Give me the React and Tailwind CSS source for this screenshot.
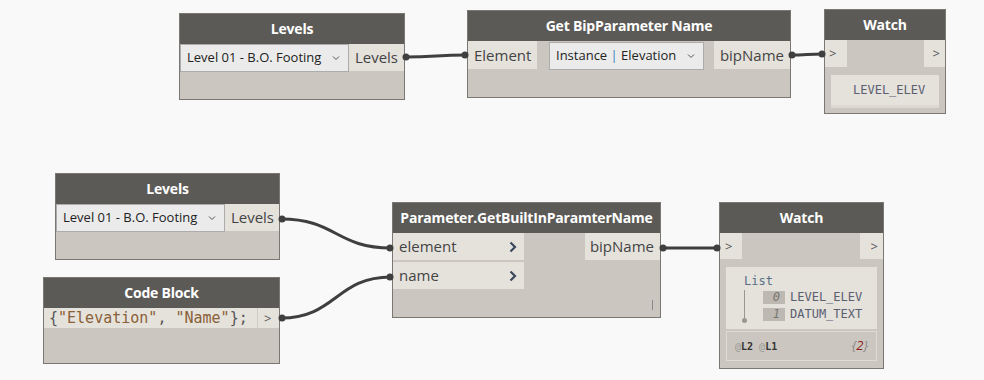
import React from "react";

const sans = { fontFamily: '"Open Sans", "Noto Sans", sans-serif' };
const mono = { fontFamily: '"DejaVu Sans Mono", "Liberation Mono", monospace' };

function Node({ left, top, width, height, title, children }) {
  return (
    <div
      className="absolute flex flex-col border border-[#7b7874] bg-[#cbc7c0]"
      style={{ left, top, width, height }}
    >
      <div className="h-[30px] shrink-0 bg-[#5c5a57] text-white font-bold text-[14px] tracking-[-0.2px] leading-[30px] text-center whitespace-nowrap overflow-hidden">
        {title}
      </div>
      {children}
    </div>
  );
}

function Dropdown({ width, text }) {
  return (
    <div
      className="h-[28px] flex items-center justify-between border border-[#acacac] bg-[#ebebeb] pl-[6px] pr-[8px] text-[13px] text-[#222]"
      style={{ width }}
    >
      <span className="whitespace-nowrap">{text}</span>
      <svg width="8" height="6" viewBox="0 0 8 6" className="ml-1">
        <path d="M1 1.5 L4 4.5 L7 1.5" stroke="#555" strokeWidth="1" fill="none" />
      </svg>
    </div>
  );
}

function Chevron() {
  return (
    <svg width="8" height="12" viewBox="0 0 8 12">
      <path d="M1.5 1.5 L6 6 L1.5 10.5" stroke="#3a4a5c" strokeWidth="2.2" fill="none" />
    </svg>
  );
}

export default function App() {
  return (
    <div className="relative w-[984px] h-[380px] overflow-hidden bg-[#f9f9f9]" style={sans}>
      {/* Levels top */}
      <Node left={179} top={13} width={226} height={87} title="Levels">
        <div className="flex">
          <Dropdown width={169} text="Level 01 - B.O. Footing" />
          <div className="flex-1 h-[27px] bg-[#e5e2dc] text-[15px] text-[#444] leading-[27px] text-right pr-[6px]">Levels</div>
        </div>
      </Node>

      {/* Get BipParameter Name */}
      <Node left={467} top={10} width={324} height={88} title="Get BipParameter Name">
        <div className="flex items-start">
          <div className="w-[69px] h-[28px] bg-[#e5e2dc] text-[15px] text-[#444] leading-[28px] pl-[6px]">Element</div>
          <div className="ml-[12px] mt-[1px]">
            <Dropdown width={155} text={<span>Instance <span className="text-[#3b7fc4]">|</span> Elevation</span>} />
          </div>
          <div className="ml-auto w-[76px] h-[28px] bg-[#e5e2dc] text-[15px] text-[#444] leading-[28px] text-right pr-[6px]">bipName</div>
        </div>
      </Node>

      {/* Watch top */}
      <Node left={824} top={9} width={122} height={105} title="Watch">
        <div className="flex justify-between">
          <div className="w-[22px] h-[27px] bg-[#e5e2dc] text-[13px] text-[#555] leading-[27px] pl-[4px]">&gt;</div>
          <div className="w-[21px] h-[27px] bg-[#e5e2dc] text-[13px] text-[#555] leading-[27px] text-right pr-[5px]">&gt;</div>
        </div>
        <div className="mx-[6px] mt-[8px] h-[30px] bg-[#e5e2dc] text-[12px] text-[#5a6070] leading-[30px] pl-[22px]" style={mono}>
          LEVEL_ELEV
        </div>
        <div className="mx-[6px] h-[3px] bg-[#dcd9d3]" />
      </Node>

      {/* Levels bottom */}
      <Node left={55} top={173} width={225} height={87} title="Levels">
        <div className="flex">
          <Dropdown width={169} text="Level 01 - B.O. Footing" />
          <div className="flex-1 h-[27px] bg-[#e5e2dc] text-[15px] text-[#444] leading-[27px] text-right pr-[5px]">Levels</div>
        </div>
      </Node>

      {/* Code Block */}
      <Node left={43} top={277} width={237} height={87} title="Code Block">
        <div className="flex h-[20px] bg-[#e5e2dc]">
          <div className="flex-1 text-[15px] leading-[20px] pl-[5px] whitespace-nowrap text-[#555]" style={mono}>
            {"{"}<span className="text-[#8a6036]">"Elevation"</span>, <span className="text-[#8a6036]">"Name"</span>{"};"}
          </div>
          <div className="w-[22px] border-l border-[#cfccc6] text-[13px] text-[#555] leading-[20px] pl-[6px]">&gt;</div>
        </div>
      </Node>

      {/* Parameter.GetBuiltInParamterName */}
      <Node left={392} top={202} width={269} height={116} title="Parameter.GetBuiltInParamterName">
        <div className="flex flex-1">
          <div className="flex flex-col gap-[2px]">
            <div className="w-[131px] h-[27px] bg-[#e5e2dc] flex items-center justify-between pl-[6px] pr-[7px] text-[15px] text-[#444]">
              <span>element</span>
              <Chevron />
            </div>
            <div className="w-[131px] h-[27px] bg-[#e5e2dc] flex items-center justify-between pl-[6px] pr-[7px] text-[15px] text-[#444]">
              <span>name</span>
              <Chevron />
            </div>
          </div>
          <div className="ml-auto flex flex-col items-end justify-between">
            <div className="w-[75px] h-[27px] bg-[#e5e2dc] text-[15px] text-[#444] leading-[27px] text-right pr-[6px]">bipName</div>
            <div className="w-[1px] h-[10px] bg-[#888] mr-[7px] mb-[7px]" />
          </div>
        </div>
      </Node>

      {/* Watch bottom */}
      <Node left={719} top={202} width={165} height={167} title="Watch">
        <div className="flex justify-between">
          <div className="w-[22px] h-[26px] bg-[#e5e2dc] text-[13px] text-[#555] leading-[26px] pl-[5px]">&gt;</div>
          <div className="w-[23px] h-[26px] bg-[#e5e2dc] text-[13px] text-[#555] leading-[26px] text-right pr-[5px]">&gt;</div>
        </div>
        <div className="mx-[6px] mt-[8px] h-[62px] bg-[#e5e2dc] relative text-[12px]" style={mono}>
          <div className="absolute left-[18px] top-[7px] text-[#5a6f86] leading-[14px]">List</div>
          <div className="absolute left-[18px] top-[23px] w-[1px] h-[29px] bg-[#9a9690]" />
          <div className="absolute left-[16px] top-[51px] w-[5px] h-[5px] rounded-full bg-[#9a9690]" />
          <div className="absolute left-[37px] top-[24px] flex items-center gap-[5px]">
            <div className="w-[22px] h-[13px] bg-[#bdb9b2] text-[#7a7672] italic text-right pr-[5px] leading-[13px]">0</div>
            <div className="text-[#5a6070] leading-[13px]">LEVEL_ELEV</div>
          </div>
          <div className="absolute left-[37px] top-[41px] flex items-center gap-[5px]">
            <div className="w-[22px] h-[13px] bg-[#bdb9b2] text-[#7a7672] italic text-right pr-[5px] leading-[13px]">1</div>
            <div className="text-[#5a6070] leading-[13px]">DATUM_TEXT</div>
          </div>
        </div>
        <div className="mx-[6px] mt-[2px] h-[30px] border border-[#dedbd5] flex items-center justify-between px-[8px]">
          <div className="text-[10px] font-bold" style={mono}>
            <span className="text-[#999] font-normal">@</span><span className="text-[#333]">L2</span>{" "}
            <span className="text-[#999] font-normal">@</span><span className="text-[#333]">L1</span>
          </div>
          <div className="text-[13px] italic text-[#888]" style={sans}>
            {"{"}<span className="text-[#8b1a1a]">2</span>{"}"}
          </div>
        </div>
      </Node>

      {/* Wires */}
      <svg className="absolute left-0 top-0 pointer-events-none" width="984" height="380">
        <g stroke="#3f3f3f" strokeWidth="3" fill="none">
          <path d="M405 57 C436 57 436 55 466 55" />
          <path d="M791 55 C807 55 807 54 823 54" />
          <path d="M281 219 C336 219 336 248 391 248" />
          <path d="M281 318 C336 318 336 277 391 277" />
          <path d="M662 248 L718 248" />
        </g>
        <g fill="#3f3f3f">
          <circle cx="406" cy="57" r="3.5" />
          <circle cx="465" cy="55" r="3.5" />
          <circle cx="792" cy="55" r="3.5" />
          <circle cx="822" cy="54" r="3.5" />
          <circle cx="282" cy="219" r="3.5" />
          <circle cx="390" cy="248" r="3.5" />
          <circle cx="282" cy="318" r="3.5" />
          <circle cx="390" cy="277" r="3.5" />
          <circle cx="663" cy="248" r="3.5" />
          <circle cx="717" cy="248" r="3.5" />
        </g>
      </svg>
    </div>
  );
}
